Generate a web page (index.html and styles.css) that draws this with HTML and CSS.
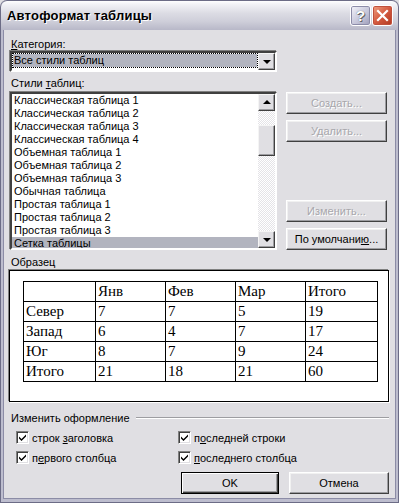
FILE: index.html
```html
<!DOCTYPE html>
<html lang="ru">
<head>
<meta charset="UTF-8">
<title>Автоформат таблицы</title>
<link rel="stylesheet" href="styles.css">
</head>
<body>
<div class="window">
    <div class="titlebar">
        <span class="title">Автоформат таблицы</span>
        <div class="caption-buttons">
            <span class="cap-btn help">?</span>
            <span class="cap-btn close">
                <svg width="13" height="13" viewBox="0 0 13 13"><path d="M2 2 L11 11 M11 2 L2 11" stroke="#fff" stroke-width="2.2" stroke-linecap="square"/></svg>
            </span>
        </div>
    </div>
    <div class="content">
        <div class="label"><u>К</u>атегория:</div>
        <div class="combo">
            <div class="combo-value"><span class="focus">Все стили таблиц</span></div>
            <span class="arrow-btn"><i class="tri-down"></i></span>
        </div>

        <div class="label gap-top">Стили <u>т</u>аблиц:</div>
        <div class="styles-row">
            <div class="listbox">
                <ul class="items">
                    <li>Классическая таблица 1</li>
                    <li>Классическая таблица 2</li>
                    <li>Классическая таблица 3</li>
                    <li>Классическая таблица 4</li>
                    <li>Объемная таблица 1</li>
                    <li>Объемная таблица 2</li>
                    <li>Объемная таблица 3</li>
                    <li>Обычная таблица</li>
                    <li>Простая таблица 1</li>
                    <li>Простая таблица 2</li>
                    <li>Простая таблица 3</li>
                    <li class="selected">Сетка таблицы</li>
                </ul>
                <div class="scrollbar">
                    <span class="arrow-btn"><i class="tri-up"></i></span>
                    <div class="track">
                        <span class="thumb"></span>
                    </div>
                    <span class="arrow-btn"><i class="tri-down"></i></span>
                </div>
            </div>
            <div class="side">
                <button class="btn disabled">Создать...</button>
                <button class="btn disabled">Удалить...</button>
                <span class="spacer"></span>
                <button class="btn disabled">Изменить...</button>
                <button class="btn">По умолчани<u>ю</u>...</button>
            </div>
        </div>

        <div class="label sample-label">Образец</div>
        <div class="preview">
            <table class="sample">
                <colgroup><col class="wide"><col><col><col><col class="wide"></colgroup>
                <tr><td></td><td>Янв</td><td>Фев</td><td>Мар</td><td>Итого</td></tr>
                <tr><td>Север</td><td>7</td><td>7</td><td>5</td><td>19</td></tr>
                <tr><td>Запад</td><td>6</td><td>4</td><td>7</td><td>17</td></tr>
                <tr><td>Юг</td><td>8</td><td>7</td><td>9</td><td>24</td></tr>
                <tr><td>Итого</td><td>21</td><td>18</td><td>21</td><td>60</td></tr>
            </table>
        </div>

        <div class="group-head"><span>Изменить оформление</span><span class="rule"></span></div>
        <div class="checks">
            <label class="check"><span class="box"><svg width="9" height="9" viewBox="0 0 9 9"><path d="M1 3.5 L3.5 6 L8 1.5 L8 3.5 L3.5 8 L1 5.5 Z" fill="#000"/></svg></span><span>строк <u>з</u>аголовка</span></label>
            <label class="check"><span class="box"><svg width="9" height="9" viewBox="0 0 9 9"><path d="M1 3.5 L3.5 6 L8 1.5 L8 3.5 L3.5 8 L1 5.5 Z" fill="#000"/></svg></span><span>п<u>о</u>следней строки</span></label>
            <label class="check"><span class="box"><svg width="9" height="9" viewBox="0 0 9 9"><path d="M1 3.5 L3.5 6 L8 1.5 L8 3.5 L3.5 8 L1 5.5 Z" fill="#000"/></svg></span><span>п<u>е</u>рвого столбца</span></label>
            <label class="check"><span class="box"><svg width="9" height="9" viewBox="0 0 9 9"><path d="M1 3.5 L3.5 6 L8 1.5 L8 3.5 L3.5 8 L1 5.5 Z" fill="#000"/></svg></span><span><u>п</u>оследнего столбца</span></label>
        </div>

        <div class="footer">
            <button class="btn default">OK</button>
            <button class="btn">Отмена</button>
        </div>
    </div>
</div>
</body>
</html>
```

FILE: styles.css
```css
html, body{
    margin: 0;
    padding: 0;
    background: #e0dfe3;
}
.window{
    width: 399px;
    height: 503px;
    box-sizing: border-box;
    background: #bdbdce;
    border: 1px solid #6c6c86;
    border-top: none;
    border-radius: 7px 7px 0 0;
    font-family: "Liberation Sans", Arial, sans-serif;
    font-size: 11px;
    color: #000;
    overflow: hidden;
}
.titlebar{
    height: 30px;
    box-sizing: border-box;
    border: 1px solid #6c6c86;
    border-bottom: none;
    border-radius: 7px 7px 0 0;
    margin: 0 -1px;
    background: linear-gradient(#ffffff 0, #f3f3f7 3px, #dcdce4 12px, #cfcfda 20px, #b8b8c8 29px);
    display: flex;
    align-items: center;
    padding: 0 5px 0 6px;
}
.title{
    flex: 1;
    font-weight: bold;
    font-size: 13px;
    letter-spacing: 0.2px;
    text-shadow: 1px 1px 0 #ffffff;
}
.caption-buttons{
    display: flex;
    gap: 1px;
}
.cap-btn{
    width: 21px;
    height: 21px;
    box-sizing: border-box;
    border: 1px solid #fff;
    border-radius: 3px;
    display: flex;
    align-items: center;
    justify-content: center;
}
.help{
    background: linear-gradient(135deg, #f4f4fa, #c4c4d8 60%, #9c9cb8);
    color: #fff;
    font-size: 15px;
    font-weight: bold;
    text-shadow: 0 0 1px #555, 1px 1px 0 #666;
    box-shadow: inset 0 0 0 1px #8c8ca8;
}
.close{
    background: linear-gradient(135deg, #f0a080, #d45a40 50%, #b03820);
    box-shadow: inset 0 0 0 1px #c0503c;
}
.content{
    height: 469px;
    box-sizing: border-box;
    margin: 0 2px;
    padding: 8px 6px 0 6px;
    background: #e0dfe3;
    border-left: 1px solid #8c8ca6;
    border-right: 1px solid #8c8ca6;
    border-bottom: 1px solid #8c8ca6;
    display: flex;
    flex-direction: column;
}
.label{
    height: 13px;
    line-height: 13px;
    padding-left: 1px;
}
.gap-top{
    margin-top: 5px;
    margin-bottom: 2px;
}
.combo{
    width: 267px;
    height: 21px;
    box-sizing: border-box;
    background: #fff;
    border-style: solid;
    border-width: 2px;
    border-color: #404040 #fff #fff #404040;
    box-shadow: -1px -1px 0 #808080;
    display: flex;
}
.combo-value{
    flex: 1;
    padding: 1px;
}
.focus{
    display: block;
    height: 13px;
    line-height: 13px;
    background: #b2b4bf;
    outline: 1px dotted #000;
    padding-left: 1px;
}
.arrow-btn{
    width: 17px;
    height: 17px;
    box-sizing: border-box;
    background: #e0dfe3;
    border-style: solid;
    border-width: 1px;
    border-color: #f4f4f4 #404040 #404040 #f4f4f4;
    box-shadow: inset -1px -1px 0 #9d9da1;
    display: flex;
    align-items: center;
    justify-content: center;
}
.tri-down, .tri-up{
    width: 0;
    height: 0;
    border-left: 4px solid transparent;
    border-right: 4px solid transparent;
}
.tri-down{
    border-top: 4px solid #000;
    margin-top: 1px;
}
.tri-up{
    border-bottom: 4px solid #000;
    margin-top: -1px;
}
.styles-row{
    display: flex;
    gap: 9px;
}
.listbox{
    width: 267px;
    height: 158px;
    box-sizing: border-box;
    background: #fff;
    border-style: solid;
    border-width: 2px;
    border-color: #404040 #fff #fff #404040;
    box-shadow: -1px -1px 0 #808080;
    display: flex;
    overflow: hidden;
}
.items{
    list-style: none;
    margin: 0;
    padding: 0;
    flex: 1;
}
.items li{
    height: 13px;
    line-height: 13px;
    padding-left: 2px;
    white-space: nowrap;
}
.items li.selected{
    background: #b2b4bf;
}
.scrollbar{
    width: 17px;
    display: flex;
    flex-direction: column;
}
.track{
    flex: 1;
    background: repeating-conic-gradient(#ffffff 0 25%, #e4e3e7 0 50%) 0 0 / 2px 2px;
    padding-top: 14px;
}
.thumb{
    display: block;
    width: 17px;
    height: 31px;
    box-sizing: border-box;
    background: #e0dfe3;
    border-style: solid;
    border-width: 1px;
    border-color: #f4f4f4 #404040 #404040 #f4f4f4;
    box-shadow: inset -1px -1px 0 #9d9da1;
}
.side{
    display: flex;
    flex-direction: column;
    width: 101px;
    gap: 6px;
}
.spacer{
    flex: 1;
}
.btn{
    width: 101px;
    height: 22px;
    box-sizing: border-box;
    background: #e0dfe3;
    font-family: "Liberation Sans", Arial, sans-serif;
    font-size: 11px;
    color: #000;
    border-style: solid;
    border-width: 1px;
    border-color: #ffffff #404040 #404040 #ffffff;
    box-shadow: inset -1px -1px 0 #9d9da1, inset 1px 1px 0 #f1f1f1;
    padding: 0;
}
.btn.disabled{
    color: #a8a7ac;
    text-shadow: 1px 1px 0 #ffffff;
}
.btn.default{
    border-color: #000;
    box-shadow: inset 1px 1px 0 #fff, inset -1px -1px 0 #404040, inset -2px -2px 0 #9d9da1;
}
.sample-label{
    margin-top: 6px;
    margin-bottom: 1px;
}
.preview{
    height: 132px;
    margin-left: -1px;
    box-sizing: border-box;
    background: #fff;
    border: 1px solid #000;
    box-shadow: -1px -1px 0 #808080, 1px 1px 0 #fff;
    padding: 10px 0 0 13px;
}
.sample{
    border-collapse: collapse;
    table-layout: fixed;
    width: 355px;
    font-family: "Liberation Serif", "Times New Roman", serif;
    font-size: 15px;
}
.sample col{
    width: 70px;
}
.sample col.wide{
    width: 72px;
}
.sample tr{
    height: 20px;
}
.sample td{
    border: 1px solid #000;
    padding: 0 0 0 2px;
    line-height: 18px;
    vertical-align: top;
}
.group-head{
    display: flex;
    align-items: center;
    margin-top: 9px;
    height: 13px;
    padding-left: 1px;
    gap: 6px;
}
.rule{
    flex: 1;
    height: 0;
    border-top: 1px solid #9d9da1;
    border-bottom: 1px solid #ffffff;
}
.checks{
    display: grid;
    grid-template-columns: 162px 1fr;
    row-gap: 7px;
    margin-top: 7px;
    padding-left: 6px;
}
.check{
    display: flex;
    align-items: center;
    height: 13px;
    gap: 3px;
}
.box{
    width: 13px;
    height: 13px;
    box-sizing: border-box;
    background: #fff;
    border-style: solid;
    border-width: 1px;
    border-color: #808080 #ffffff #ffffff #808080;
    box-shadow: inset 1px 1px 0 #404040, inset -1px -1px 0 #e0dfe3;
    display: flex;
    align-items: center;
    justify-content: center;
}
.footer{
    display: flex;
    justify-content: flex-end;
    gap: 10px;
    margin-top: 8px;
}
.footer .btn{
    width: 98px;
}
.footer .btn + .btn{
    width: 100px;
}
```
